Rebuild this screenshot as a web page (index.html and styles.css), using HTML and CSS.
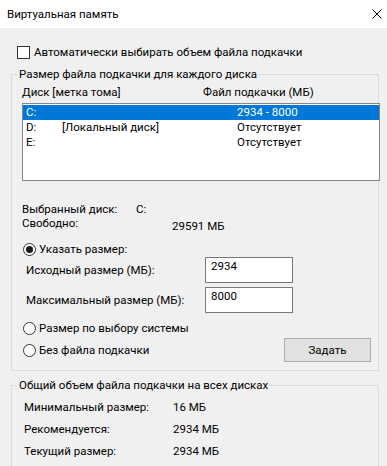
FILE: index.html
```html
<!DOCTYPE html>
<html lang="ru">
<head>
    <meta charset="UTF-8">
    <meta name="viewport" content="width=device-width, initial-scale=1.0">
    <title>Виртуальная память</title>
    <link rel="stylesheet" href="styles.css">
</head>
<body>
    <div class="titlebar">
        <span class="title">Виртуальная память</span>
        <svg class="close" width="10" height="10" viewBox="0 0 10 10">
            <path d="M0.5 0.5 L9.5 9.5 M9.5 0.5 L0.5 9.5" stroke="#000" stroke-width="1" fill="none"/>
        </svg>
    </div>
    <div class="dialog">
        <div class="check-row">
            <span class="checkbox"></span>
            <span>Автоматически выбирать объем файла подкачки</span>
        </div>

        <fieldset class="group">
            <legend>Размер файла подкачки для каждого диска</legend>
            <div class="group-body">
                <div class="list-header">
                    <span class="col-head-disk">Диск [метка тома]</span>
                    <span>Файл подкачки (МБ)</span>
                </div>
                <div class="listbox">
                    <div class="list-row selected">
                        <span class="col-letter">C:</span>
                        <span class="col-label"></span>
                        <span>2934 - 8000</span>
                    </div>
                    <div class="list-row">
                        <span class="col-letter">D:</span>
                        <span class="col-label">[Локальный диск]</span>
                        <span>Отсутствует</span>
                    </div>
                    <div class="list-row">
                        <span class="col-letter">E:</span>
                        <span class="col-label"></span>
                        <span>Отсутствует</span>
                    </div>
                </div>

                <div class="info-row first">
                    <span class="info-label">Выбранный диск:</span>
                    <span>C:</span>
                </div>
                <div class="info-row">
                    <span class="info-label wide">Свободно:</span>
                    <span class="info-value">29591 МБ</span>
                </div>

                <div class="radio-row custom">
                    <span class="radio checked"></span>
                    <span>Указать размер:</span>
                </div>
                <div class="field-row">
                    <span class="field-label">Исходный размер (МБ):</span>
                    <span class="textbox">2934</span>
                </div>
                <div class="field-row">
                    <span class="field-label">Максимальный размер (МБ):</span>
                    <span class="textbox">8000</span>
                </div>

                <div class="radio-row system">
                    <span class="radio"></span>
                    <span>Размер по выбору системы</span>
                </div>
                <div class="action-row">
                    <div class="radio-row">
                        <span class="radio"></span>
                        <span>Без файла подкачки</span>
                    </div>
                    <button class="btn">Задать</button>
                </div>
            </div>
        </fieldset>

        <fieldset class="group totals">
            <legend>Общий объем файла подкачки на всех дисках</legend>
            <div class="totals-body">
                <div class="total-row">
                    <span class="total-label">Минимальный размер:</span>
                    <span>16 МБ</span>
                </div>
                <div class="total-row">
                    <span class="total-label">Рекомендуется:</span>
                    <span>2934 МБ</span>
                </div>
                <div class="total-row">
                    <span class="total-label">Текущий размер:</span>
                    <span>2934 МБ</span>
                </div>
            </div>
        </fieldset>
    </div>
</body>
</html>
```

FILE: styles.css
```css
body {
    margin: 0;
    font-family: Roboto, "Noto Sans", sans-serif;
    font-size: 11.5px;
    line-height: 15px;
    color: #000;
    background: #f0f0f0;
    overflow: hidden;
}
.titlebar {
    height: 28px;
    background: #fff;
    display: flex;
    align-items: center;
    justify-content: space-between;
    padding: 0 5px 0 7px;
}
.close {
    display: block;
}
.dialog {
    padding: 17px 0 0 11px;
}
.check-row {
    display: flex;
    align-items: center;
    height: 15px;
    padding-left: 6px;
}
.checkbox {
    width: 11px;
    height: 11px;
    border: 1px solid #333;
    background: #fff;
    margin-right: 4px;
}
.group {
    margin: 7px 0 0 0;
    padding: 0;
    width: 368px;
    box-sizing: border-box;
    border: 1px solid #dcdcdc;
    min-inline-size: 0;
}
.group legend {
    margin-left: 5px;
    padding: 0 2px;
    line-height: 15px;
}
.group-body {
    padding: 3px 7px 8px 10px;
}
.list-header {
    display: flex;
    height: 15px;
}
.col-head-disk {
    width: 181px;
}
.listbox {
    margin-top: 3px;
    width: 358px;
    height: 78px;
    box-sizing: border-box;
    border: 1px solid #828790;
    background: #fff;
    padding-top: 1px;
}
.list-row {
    display: flex;
    height: 15px;
    line-height: 15px;
    padding-left: 3px;
}
.list-row.selected {
    background: #0078d7;
    color: #fff;
}
.col-letter {
    width: 36px;
}
.col-label {
    width: 175px;
}
.info-row {
    display: flex;
    height: 14px;
    line-height: 14px;
}
.info-row.first {
    margin-top: 21px;
}
.info-label {
    width: 114px;
}
.info-label.wide {
    width: 150px;
}
.info-value {
    padding-top: 3px;
}
.radio-row {
    display: flex;
    align-items: center;
    height: 15px;
    padding-left: 1px;
}
.radio-row.custom {
    margin-top: 12px;
}
.radio-row.system {
    margin-top: 8px;
}
.radio {
    width: 11px;
    height: 11px;
    border: 1px solid #333;
    border-radius: 50%;
    background: #fff;
    margin-right: 3px;
    display: flex;
    align-items: center;
    justify-content: center;
}
.radio.checked::after {
    content: "";
    width: 7px;
    height: 7px;
    border-radius: 50%;
    background: #1a1a1a;
}
.field-row {
    display: flex;
    align-items: center;
    height: 26px;
}
.field-row + .field-row {
    margin-top: 4px;
}
.field-label {
    width: 179px;
    padding-left: 4px;
}
.textbox {
    width: 88px;
    height: 26px;
    box-sizing: border-box;
    border: 1px solid #7a7a7a;
    background: #fff;
    padding: 1px 5px;
}
.action-row {
    display: flex;
    align-items: center;
    justify-content: space-between;
    margin-top: 2px;
}
.btn {
    width: 87px;
    height: 24px;
    padding: 0;
    font-family: inherit;
    font-size: 11.5px;
    color: #000;
    background: #e1e1e1;
    border: 1px solid #adadad;
    border-radius: 0;
}
.totals-body {
    padding: 3px 0 10px 12px;
}
.total-row {
    display: flex;
    height: 22px;
    line-height: 22px;
}
.total-label {
    width: 149px;
}
```
